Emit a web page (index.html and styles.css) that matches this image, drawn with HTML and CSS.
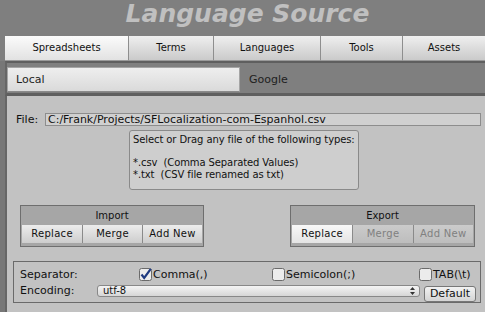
FILE: index.html
```html
<!DOCTYPE html>
<html lang="en">
<head>
    <meta charset="UTF-8">
    <title>Language Source</title>
    <link rel="stylesheet" href="styles.css">
</head>
<body>
    <h1 class="title">Language Source</h1>
    <div class="tabs">
        <div class="tab active">Spreadsheets</div>
        <div class="tab">Terms</div>
        <div class="tab">Languages</div>
        <div class="tab">Tools</div>
        <div class="tab">Assets</div>
    </div>
    <div class="main">
        <div class="sources">
            <div class="source active">Local</div>
            <div class="source">Google</div>
        </div>
        <div class="panel">
            <div class="file-row">
                <span class="file-label">File:</span>
                <div class="field">C:/Frank/Projects/SFLocalization-com-Espanhol.csv</div>
            </div>
            <div class="hint">
                <div>Select or Drag any file of the following types:</div>
                <div>&nbsp;</div>
                <div>*.csv&nbsp; (Comma Separated Values)</div>
                <div>*.txt&nbsp; (CSV file renamed as txt)</div>
            </div>
            <div class="groups">
                <div class="group">
                    <div class="group-title">Import</div>
                    <div class="group-buttons">
                        <div class="btn">Replace</div>
                        <div class="btn">Merge</div>
                        <div class="btn">Add New</div>
                    </div>
                </div>
                <div class="group export">
                    <div class="group-title">Export</div>
                    <div class="group-buttons">
                        <div class="btn selected">Replace</div>
                        <div class="btn disabled">Merge</div>
                        <div class="btn disabled">Add New</div>
                    </div>
                </div>
            </div>
            <div class="settings">
                <div class="sep-row">
                    <span class="set-label">Separator:</span>
                    <label class="option comma">
                        <svg class="check" width="13" height="13" viewBox="0 0 13 13">
                            <rect x="0.5" y="0.5" width="12" height="12" rx="2" fill="#ececec" stroke="#6a6a6a"/>
                            <path d="M2.5 6.5 L5.2 10 L11.8 0.8" fill="none" stroke="#1f3a80" stroke-width="2.2"/>
                        </svg>Comma(,)
                    </label>
                    <label class="option semi">
                        <svg class="check" width="13" height="13" viewBox="0 0 13 13">
                            <rect x="0.5" y="0.5" width="12" height="12" rx="2" fill="#ececec" stroke="#6a6a6a"/>
                        </svg>Semicolon(;)
                    </label>
                    <label class="option">
                        <svg class="check" width="13" height="13" viewBox="0 0 13 13">
                            <rect x="0.5" y="0.5" width="12" height="12" rx="2" fill="#ececec" stroke="#6a6a6a"/>
                        </svg>TAB(\t)
                    </label>
                </div>
                <div class="enc-row">
                    <span class="enc-label">Encoding:</span>
                    <div class="select">
                        <span>utf-8</span>
                        <svg width="5" height="8" viewBox="0 0 5 8">
                            <path d="M0 3 L2.5 0 L5 3 Z M0 5 L2.5 8 L5 5 Z" fill="#333"/>
                        </svg>
                    </div>
                    <div class="default-btn">Default</div>
                </div>
            </div>
        </div>
    </div>
</body>
</html>
```

FILE: styles.css
```css
body {
    margin: 0;
    width: 485px;
    height: 312px;
    overflow: hidden;
    background-color: #7f7f7f;
    font-family: "DejaVu Sans", sans-serif;
    font-size: 11px;
    color: #111;
}
.title {
    margin: 0;
    height: 36px;
    padding-left: 10px;
    font-size: 25px;
    line-height: 28px;
    font-style: italic;
    font-weight: bold;
    text-align: center;
    color: #c0c0c0;
}
.tabs {
    display: grid;
    grid-template-columns: 123px 85px 107px 82px 1fr;
    margin-left: 5px;
    height: 25px;
}
.tab {
    font-size: 10px;
    line-height: 24px;
    text-align: center;
    background: linear-gradient(#efefef, #cacaca);
    border-left: 1px solid #8e8e8e;
    border-bottom: 1px solid #9a9a9a;
}
.tab:first-child {
    border-left: none;
}
.tab.active {
    background: linear-gradient(#fbfbfb, #e2e2e2);
}
.main {
    border-left: 5px solid #777;
}
.sources {
    display: flex;
    height: 35px;
    box-sizing: border-box;
    border-top: 2px solid #5f5f5f;
    border-bottom: 3px solid #5f5f5f;
    border-left: 2px solid #666;
    padding-top: 4px;
}
.source {
    flex: 1;
    height: 25px;
    line-height: 25px;
    padding-left: 9px;
    color: #1e1e1e;
}
.source.active {
    flex: none;
    width: 233px;
    box-sizing: border-box;
    padding-left: 8px;
    line-height: 23px;
    background: linear-gradient(#eeeeee, #dadada);
    border: 1px solid #a5a5a5;
    border-bottom-color: #8a8a8a;
}
.panel {
    height: 216px;
    background-color: #c2c2c2;
    border-left: 2px solid #666;
    overflow: hidden;
}
.file-row {
    display: flex;
    align-items: center;
    margin: 17px 4px 0 9px;
}
.file-label {
    width: 29px;
    line-height: 12px;
}
.field {
    flex: 1;
    height: 13px;
    box-sizing: border-box;
    line-height: 11px;
    padding-left: 2px;
    background-color: #d0d0d0;
    border: 1px solid #8d8d8d;
    white-space: nowrap;
}
.hint {
    width: 230px;
    height: 60px;
    box-sizing: border-box;
    margin: 4px 0 0 122px;
    padding: 3px 3px;
    font-size: 10px;
    letter-spacing: -0.1px;
    line-height: 11.5px;
    background-color: #cecece;
    border: 1px solid #8a8a8a;
    border-radius: 3px;
    white-space: nowrap;
}
.groups {
    display: flex;
    justify-content: space-between;
    margin-top: 15px;
    padding: 0 10px 0 13px;
}
.group {
    width: 184px;
    height: 42px;
    box-sizing: border-box;
    background-color: #a6a6a6;
    border: 1px solid #6e6e6e;
    padding: 0 1px;
}
.group.export {
    width: 185px;
}
.group-title {
    height: 19px;
    line-height: 19px;
    font-size: 10px;
    text-align: center;
}
.group-buttons {
    display: grid;
    grid-template-columns: 1fr 1fr 1fr;
    height: 18px;
}
.btn {
    font-size: 10px;
    line-height: 18px;
    text-align: center;
    letter-spacing: 0.3px;
    background: linear-gradient(#ececec, #cdcdcd);
    border-left: 1px solid #8a8a8a;
}
.btn:first-child {
    border-left: none;
}
.btn.selected {
    background: linear-gradient(#f8f8f8, #e4e4e4);
}
.btn.disabled {
    color: #808080;
    background: linear-gradient(#cbcbcb, #bdbdbd);
}
.settings {
    height: 42px;
    box-sizing: border-box;
    margin: 14px 4px 0 6px;
    border: 1px solid #6a6a6a;
    padding-top: 6px;
}
.sep-row {
    display: grid;
    grid-template-columns: 125px 133px 147px auto;
    height: 13px;
    align-items: center;
}
.set-label,
.enc-label {
    padding-left: 6px;
}
.option {
    display: flex;
    align-items: center;
    gap: 1px;
    line-height: 13px;
}
.check {
    flex: none;
}
.enc-row {
    display: flex;
    align-items: flex-start;
    margin-top: 4px;
    height: 17px;
}
.enc-label {
    width: 77px;
    line-height: 12px;
}
.select {
    display: flex;
    align-items: center;
    justify-content: space-between;
    width: 323px;
    height: 12px;
    box-sizing: border-box;
    padding: 0 4px 0 5px;
    font-size: 10px;
    line-height: 10px;
    background: linear-gradient(#f4f4f4, #d6d6d6);
    border: 1px solid #888;
    border-radius: 3px;
}
.default-btn {
    width: 52px;
    height: 16px;
    box-sizing: border-box;
    margin: 1px 0 0 4px;
    line-height: 14px;
    text-align: center;
    background: linear-gradient(#f2f2f2, #d4d4d4);
    border: 1px solid #777;
    border-radius: 3px;
}
```
